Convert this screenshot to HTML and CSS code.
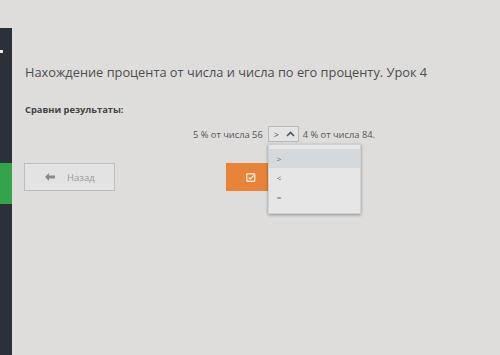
FILE: index.html
```html
<!DOCTYPE html>
<html lang="ru">
<head>
<meta charset="utf-8">
<link rel="stylesheet" href="styles.css">
</head>
<body>
<div class="page">
  <aside class="sidebar">
    <span class="dot"></span>
    <span class="green"></span>
  </aside>
  <main class="main">
    <h1 class="title">Нахождение процента от числа и числа по его проценту. Урок 4</h1>
    <div class="label">Сравни результаты:</div>
    <div class="compare">
      <span class="expr">5 % от числа 56</span>
      <span class="select-wrap">
        <span class="select">
          <span class="sel-value">&gt;</span>
          <svg class="chev" width="9" height="6" viewBox="0 0 9 6"><path d="M1 5 L4.5 1.5 L8 5" fill="none" stroke="#555" stroke-width="1.6"/></svg>
        </span>
        <ul class="dropdown">
          <li class="opt active">&gt;</li>
          <li class="opt">&lt;</li>
          <li class="opt">=</li>
        </ul>
      </span>
      <span class="expr">4 % от числа 84.</span>
    </div>
    <div class="buttons">
      <button class="btn-back">
        <svg width="10" height="8" viewBox="0 0 10 8"><path d="M0 4 L4 0 L4 2.5 L10 2.5 L10 5.5 L4 5.5 L4 8 Z" fill="#8a8a8a"/></svg>
        <span>Назад</span>
      </button>
      <button class="btn-check">
        <svg width="10" height="9" viewBox="0 0 10 9"><rect x="0.8" y="0.8" width="8" height="7.4" rx="1" fill="none" stroke="#f6e2d0" stroke-width="1.4"/><path d="M2.6 4.4 L4.3 6 L7.6 2.6" fill="none" stroke="#f6e2d0" stroke-width="1.4"/></svg>
      </button>
    </div>
  </main>
</div>
</body>
</html>
```
FILE: styles.css
```css
html, body {
  margin: 0;
  padding: 0;
  height: 100%;
  background: #dedddc;
  font-family: "Open Sans", "Noto Sans", sans-serif;
}
.page {
  display: flex;
  height: 355px;
  overflow: hidden;
}
.sidebar {
  width: 12px;
  margin-top: 28px;
  background: #2b3136;
  display: flex;
  flex-direction: column;
  flex-shrink: 0;
}
.dot {
  display: block;
  width: 3px;
  height: 3px;
  background: #e8e8e8;
  margin-top: 22px;
}
.green {
  display: block;
  height: 41px;
  width: 12px;
  background: #34a44a;
  margin-top: 110px;
}
.main {
  padding-left: 12px;
  flex: 1;
}
.title {
  margin: 63px 0 0 1px;
  font-size: 12.8px;
  font-weight: 400;
  color: #4d4d4d;
  line-height: 18px;
  letter-spacing: 0;
}
.label {
  margin-top: 23px;
  margin-left: 1px;
  font-size: 9.3px;
  font-weight: 700;
  color: #444;
  line-height: 12px;
}
.compare {
  display: flex;
  align-items: center;
  margin-top: 10px;
  margin-left: 169px;
  font-size: 9.3px;
  color: #555;
  height: 16px;
}
.select-wrap {
  position: relative;
  margin: 0 4px 0 5px;
}
.select {
  display: flex;
  align-items: center;
  justify-content: space-between;
  box-sizing: border-box;
  width: 31px;
  height: 16px;
  border: 1px solid #b9b9b9;
  background: #e4e4e4;
  padding: 0 3px 0 5px;
  font-size: 9px;
  color: #555;
}
.dropdown {
  position: absolute;
  top: 18px;
  left: 0;
  width: 93px;
  height: 70px;
  margin: 0;
  padding: 4px 0 0 0;
  box-sizing: border-box;
  list-style: none;
  background: #e6e6e6;
  border: 1px solid #cfcfcf;
  box-shadow: 0 1px 3px rgba(0,0,0,0.35);
  z-index: 2;
}
.opt {
  height: 19px;
  line-height: 19px;
  padding-left: 8px;
  font-size: 8px;
  color: #666;
}
.opt.active {
  background: #d3d9dc;
}
.buttons {
  display: flex;
  margin-top: 21px;
  gap: 111px;
}
.btn-back {
  display: flex;
  align-items: center;
  gap: 12px;
  box-sizing: border-box;
  width: 91px;
  height: 28px;
  padding: 0 0 0 20px;
  border: 1px solid #bdbdbd;
  background: #e3e3e3;
  font-family: "Open Sans", "Noto Sans", sans-serif;
  font-size: 9.5px;
  color: #999;
}
.btn-check {
  display: flex;
  align-items: center;
  justify-content: center;
  width: 50px;
  height: 28px;
  border: none;
  padding: 0;
  background: #e7843a;
}
```
